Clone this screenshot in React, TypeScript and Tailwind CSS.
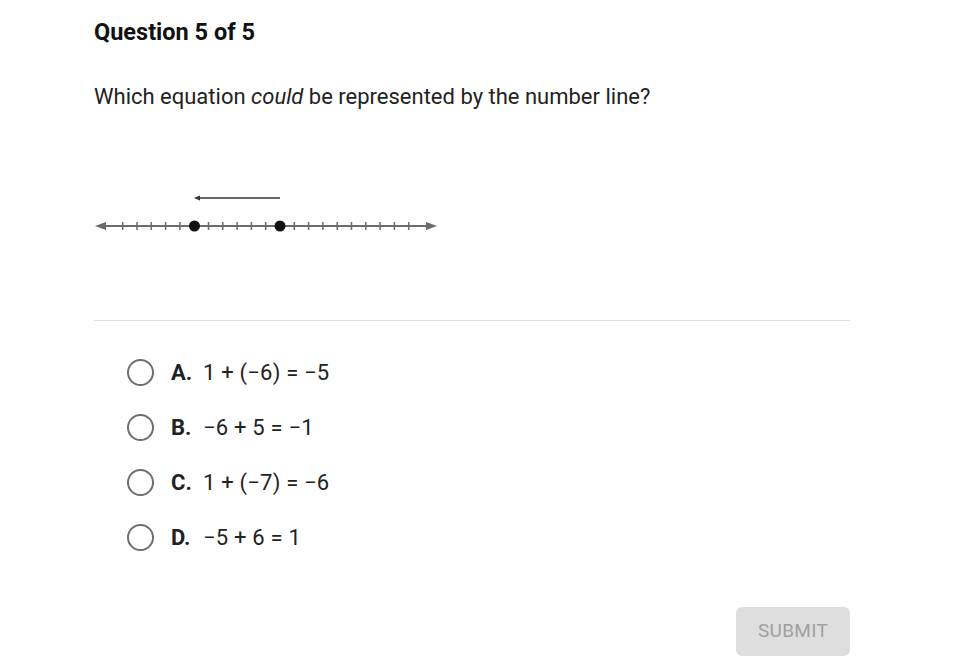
const options = [
  { letter: 'A.', text: '1 + (−6) = −5' },
  { letter: 'B.', text: '−6 + 5 = −1' },
  { letter: 'C.', text: '1 + (−7) = −6' },
  { letter: 'D.', text: '−5 + 6 = 1' },
]

function NumberLine() {
  const ticks = Array.from({ length: 21 }, (_, i) => 28.7 + i * 14.3)
  return (
    <svg width="350" height="50" viewBox="0 0 350 50" className="block">
      {/* jump arrow */}
      <line x1="104" y1="8" x2="186" y2="8" stroke="#333" strokeWidth="1.6" />
      <path d="M100 8 L106 5.5 L106 10.5 Z" fill="#333" />
      {/* axis */}
      <line x1="8" y1="36" x2="336" y2="36" stroke="#6b6b6b" strokeWidth="2" />
      <path d="M1 36 L12 32 L12 40 Z" fill="#6b6b6b" />
      <path d="M343 36 L332 32 L332 40 Z" fill="#6b6b6b" />
      {ticks.map((x, i) => (
        <line key={i} x1={x} y1="32" x2={x} y2="40" stroke="#6b6b6b" strokeWidth="1.5" />
      ))}
      <circle cx="100.5" cy="36" r="5.5" fill="#111" />
      <circle cx="186" cy="36" r="5.5" fill="#111" />
    </svg>
  )
}

export default function App() {
  return (
    <div className="w-[963px] h-[670px] bg-white text-[#222] font-['Roboto','Liberation_Sans',sans-serif] overflow-hidden">
      <div className="w-[756px] ml-[94px] pt-[18px] flex flex-col">
        <h1 className="text-[23.5px] font-bold leading-[29px] text-[#111]">Question 5 of 5</h1>

        <p className="mt-[36px] text-[22px] leading-[28px] text-[#222]">
          Which equation <em>could</em> be represented by the number line?
        </p>

        <div className="mt-[79px]">
          <NumberLine />
        </div>

        <div className="mt-[80px] h-px bg-[#e0e0e0]" />

        <div className="mt-[37px] ml-[33px] flex flex-col gap-[27px]">
          {options.map(o => (
            <div key={o.letter} className="flex items-center h-[28px]">
              <span className="w-[27px] h-[27px] rounded-full border-2 border-[#6e6e6e] shrink-0" />
              <span className="ml-[17px] w-[32px] text-[22px] font-bold text-[#222]">{o.letter}</span>
              <span className="text-[22px] text-[#222] tracking-[0.2px]">{o.text}</span>
            </div>
          ))}
        </div>

        <div className="mt-[56px] flex justify-end">
          <button className="w-[114px] h-[49px] rounded-[6px] bg-[#dedede] text-[#a0a0a0] text-[19px] tracking-[0.3px]">
            SUBMIT
          </button>
        </div>
      </div>
    </div>
  )
}
